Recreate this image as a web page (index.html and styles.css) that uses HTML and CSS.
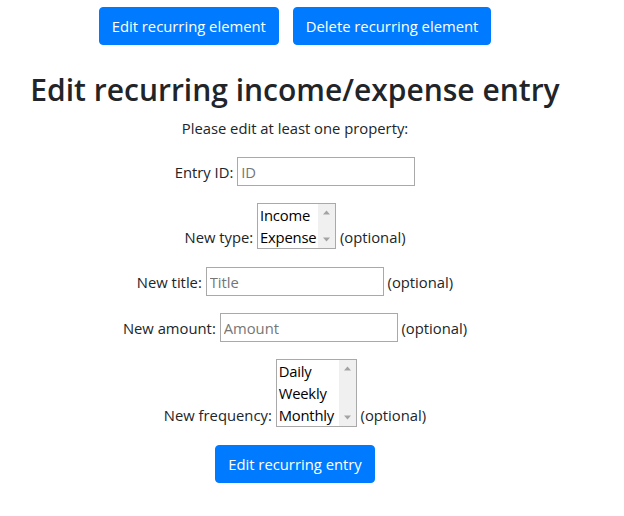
FILE: index.html
```html
<!DOCTYPE html>
<html lang="en">
<head>
<meta charset="utf-8">
<title>Edit recurring entry</title>
<link rel="stylesheet" href="styles.css">
</head>
<body>
<main class="page">
  <div class="actions">
    <button class="btn" type="button">Edit recurring element</button>
    <button class="btn" type="button">Delete recurring element</button>
  </div>
  <h2 class="title">Edit recurring income/expense entry</h2>
  <p class="hint">Please edit at least one property:</p>
  <form class="form">
    <div class="field"><label for="entry-id">Entry ID:</label> <input id="entry-id" class="text-input" type="text" placeholder="ID"></div>
    <div class="field field-list"><label>New type:</label> <span class="listbox listbox-2" role="listbox" aria-label="New type"><span class="scrollbar"><svg class="arrow" viewBox="0 0 17 17"><path d="M5 10.5h7L8.5 6.5z"/></svg><svg class="arrow" viewBox="0 0 17 17"><path d="M5 6.5h7L8.5 10.5z"/></svg></span><span class="option">Income</span><span class="option">Expense</span></span> <span class="optional">(optional)</span></div>
    <div class="field"><label for="new-title">New title:</label> <input id="new-title" class="text-input" type="text" placeholder="Title"> <span class="optional">(optional)</span></div>
    <div class="field"><label for="new-amount">New amount:</label> <input id="new-amount" class="text-input" type="text" placeholder="Amount"> <span class="optional">(optional)</span></div>
    <div class="field field-list"><label>New frequency:</label> <span class="listbox listbox-3" role="listbox" aria-label="New frequency"><span class="scrollbar"><svg class="arrow" viewBox="0 0 17 17"><path d="M5 10.5h7L8.5 6.5z"/></svg><svg class="arrow" viewBox="0 0 17 17"><path d="M5 6.5h7L8.5 10.5z"/></svg></span><span class="option">Daily</span><span class="option">Weekly</span><span class="option">Monthly</span></span> <span class="optional">(optional)</span></div>
    <div class="field"><button class="btn" type="submit">Edit recurring entry</button></div>
  </form>
</main>
</body>
</html>
```

FILE: styles.css
```css
* {
  box-sizing: border-box;
}

body {
  margin: 0;
  font-family: "Open Sans", "Noto Sans", sans-serif;
  font-size: 14.8px;
  line-height: 24px;
  color: #212529;
  background: #fff;
}

.page {
  width: 590px;
  text-align: center;
}

.actions {
  display: flex;
  justify-content: center;
  gap: 14px;
  padding-top: 7px;
}

.btn {
  font: inherit;
  line-height: 24px;
  padding: 6px 12px;
  border: 1px solid #007bff;
  border-radius: 4px;
  background: #007bff;
  color: #fff;
  cursor: pointer;
}

.title {
  font-size: 30px;
  font-weight: 600;
  line-height: 36px;
  margin: 27px 0 8px;
  color: #212529;
}

.hint {
  margin: 0 0 17px;
}

.form {
  margin: 0;
}

.field {
  margin-bottom: 17px;
}

.field-list {
  margin-bottom: 18px;
}

.text-input {
  width: 178px;
  height: 29px;
  margin: 0;
  padding: 0 3px;
  border: 1px solid #a9a9a9;
  border-radius: 0;
  font: inherit;
  line-height: 27px;
  color: #212529;
  vertical-align: baseline;
}

.text-input::placeholder {
  color: #767676;
}

.listbox {
  display: inline-block;
  vertical-align: baseline;
  border: 1px solid #a9a9a9;
  text-align: left;
  color: #000;
  background: #fff;
}

.listbox-2 {
  width: 79px;
  height: 46px;
}

.listbox-3 {
  width: 81px;
  height: 68px;
}

.option {
  display: block;
  line-height: 22px;
  padding-left: 2px;
  letter-spacing: -0.2px;
  white-space: nowrap;
}

.scrollbar {
  float: right;
  width: 17px;
  height: 100%;
  background: #f0f0f0;
  display: flex;
  flex-direction: column;
  justify-content: space-between;
}

.arrow {
  display: block;
  width: 17px;
  height: 17px;
  fill: #a3a3a3;
}
```
